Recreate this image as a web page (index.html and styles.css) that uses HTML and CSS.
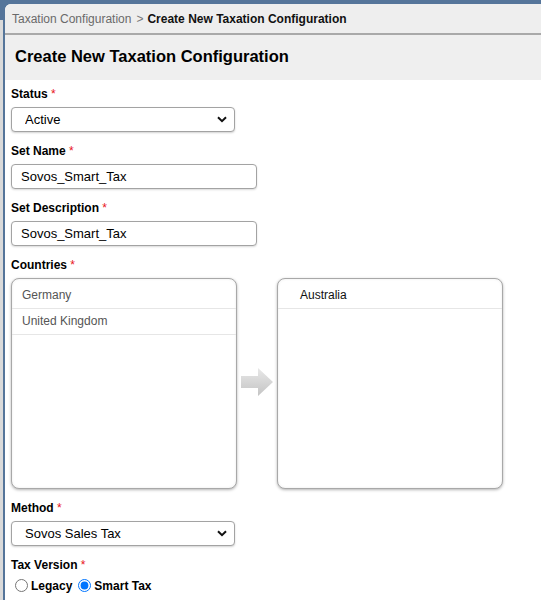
FILE: index.html
```html
<!DOCTYPE html>
<html>
<head>
<meta charset="utf-8">
<link rel="stylesheet" href="styles.css">
</head>
<body>
<div class="shell">
  <div class="gutter"></div>
  <div class="panel">
    <div class="crumbs"><span class="crumb-link">Taxation Configuration</span><span class="crumb-sep">&gt;</span><span class="crumb-current">Create New Taxation Configuration</span></div>
    <div class="header"><h1 class="title">Create New Taxation Configuration</h1></div>
    <div class="content">
      <div class="group">
        <div class="label">Status <span class="req">*</span></div>
        <div class="select-wrap short">
          <select class="select"><option>Active</option></select>
          <svg class="chev" width="10" height="7" viewBox="0 0 10 7"><path d="M1 1.2 L5 5.2 L9 1.2" fill="none" stroke="#111" stroke-width="2"/></svg>
        </div>
      </div>
      <div class="group">
        <div class="label">Set Name <span class="req">*</span></div>
        <input class="text" type="text" value="Sovos_Smart_Tax">
      </div>
      <div class="group">
        <div class="label">Set Description <span class="req">*</span></div>
        <input class="text" type="text" value="Sovos_Smart_Tax">
      </div>
      <div class="group">
        <div class="label">Countries <span class="req">*</span></div>
        <div class="dual">
          <div class="list left">
            <div class="item">Germany</div>
            <div class="item">United Kingdom</div>
          </div>
          <div class="mover">
            <svg width="33" height="30" viewBox="0 0 33 30">
              <defs>
                <linearGradient id="ag" x1="0" y1="0" x2="0" y2="1">
                  <stop offset="0" stop-color="#e8e8e8"/>
                  <stop offset="1" stop-color="#c4c4c4"/>
                </linearGradient>
              </defs>
              <path d="M0 9 H17 V1 L32 15 L17 29 V21 H0 Z" fill="url(#ag)"/>
            </svg>
          </div>
          <div class="list right">
            <div class="item">Australia</div>
          </div>
        </div>
      </div>
      <div class="group">
        <div class="label">Method <span class="req">*</span></div>
        <div class="select-wrap short">
          <select class="select"><option>Sovos Sales Tax</option></select>
          <svg class="chev" width="10" height="7" viewBox="0 0 10 7"><path d="M1 1.2 L5 5.2 L9 1.2" fill="none" stroke="#111" stroke-width="2"/></svg>
        </div>
      </div>
      <div class="group">
        <div class="label">Tax Version <span class="req">*</span></div>
        <div class="radios">
          <label class="radio"><input type="radio" name="tv">Legacy</label>
          <label class="radio"><input type="radio" name="tv" checked>Smart Tax</label>
        </div>
      </div>
    </div>
  </div>
</div>
</body>
</html>
```
FILE: styles.css
```css
html, body {
  margin: 0;
  padding: 0;
}
body {
  background: #55759a;
  font-family: "Liberation Sans", Arial, sans-serif;
  color: #000;
  overflow: hidden;
}
.shell {
  display: flex;
  padding-top: 4px;
  min-height: 596px;
}
.gutter {
  width: 3px;
  flex: none;
  background: linear-gradient(#55759a 0 16px, #dadada 16px);
}
.panel {
  flex: 1;
  margin-left: 2px;
  background: #fff;
  border-top-left-radius: 6px;
  overflow: hidden;
}
.crumbs {
  background: #eeeeee;
  box-sizing: border-box;
  height: 31px;
  border-bottom: 2px solid #a9a9a9;
  padding-left: 7px;
  display: flex;
  align-items: center;
  font-size: 12px;
}
.crumb-link { color: #6a6a6a; }
.crumb-sep { color: #777; margin: 0 4px 0 5px; }
.crumb-current { font-weight: bold; color: #111; }
.header {
  background: #efefef;
  box-sizing: border-box;
  height: 45px;
  display: flex;
  align-items: center;
  padding-left: 10px;
  padding-bottom: 3px;
}
.title {
  margin: 0;
  font-size: 16.5px;
  font-weight: bold;
  color: #000;
}
.content {
  padding: 7px 6px 0 6px;
}
.group {
  margin-bottom: 12px;
}
.label {
  font-size: 12px;
  font-weight: bold;
  line-height: 15px;
  height: 15px;
  margin-bottom: 5px;
}
.req { color: #e8141a; font-weight: normal; }
.select-wrap {
  position: relative;
  width: 224px;
}
.select {
  appearance: none;
  -webkit-appearance: none;
  box-sizing: border-box;
  width: 100%;
  height: 25px;
  border: 1px solid #a3a3a3;
  border-radius: 4px;
  background: #fff;
  box-shadow: 0 1px 2px rgba(0,0,0,0.18);
  font-family: "Liberation Sans", Arial, sans-serif;
  font-size: 13px;
  color: #000;
  padding: 0 0 0 13px;
  margin: 0;
  display: block;
}
.chev {
  position: absolute;
  right: 8px;
  top: 9px;
  pointer-events: none;
}
.text {
  display: block;
  width: 246px;
  height: 25px;
  box-sizing: border-box;
  border: 1px solid #a3a3a3;
  border-radius: 4px;
  box-shadow: 0 1px 2px rgba(0,0,0,0.15);
  font-family: "Liberation Sans", Arial, sans-serif;
  font-size: 13px;
  color: #000;
  padding: 0 0 0 9px;
  margin: 0;
}
.dual {
  display: flex;
  align-items: stretch;
}
.list {
  height: 211px;
  box-sizing: border-box;
  border: 1px solid #a8a8a8;
  border-radius: 8px;
  box-shadow: 0 1px 3px rgba(0,0,0,0.3), inset 0 0 3px rgba(0,0,0,0.08);
  background: #fff;
  padding-top: 4px;
  overflow: hidden;
}
.list.left { width: 226px; }
.list.right { width: 226px; }
.item {
  height: 25px;
  line-height: 25px;
  font-size: 12px;
  border-bottom: 1px solid #e6e6e6;
}
.left .item { padding-left: 10px; color: #555; }
.right .item { padding-left: 22px; color: #111; }
.mover {
  width: 40px;
  flex: none;
  display: flex;
  align-items: center;
  padding-left: 4px;
  padding-bottom: 4px;
  box-sizing: border-box;
}
.mover svg { display: block; }
.radios {
  display: flex;
  align-items: center;
  height: 15px;
}
.radio {
  display: flex;
  align-items: center;
  font-size: 12px;
  font-weight: bold;
  margin-right: 2px;
}
.radio input {
  width: 13px;
  height: 13px;
  margin: 0 3px 0 4px;
  accent-color: #0075ff;
}
```
